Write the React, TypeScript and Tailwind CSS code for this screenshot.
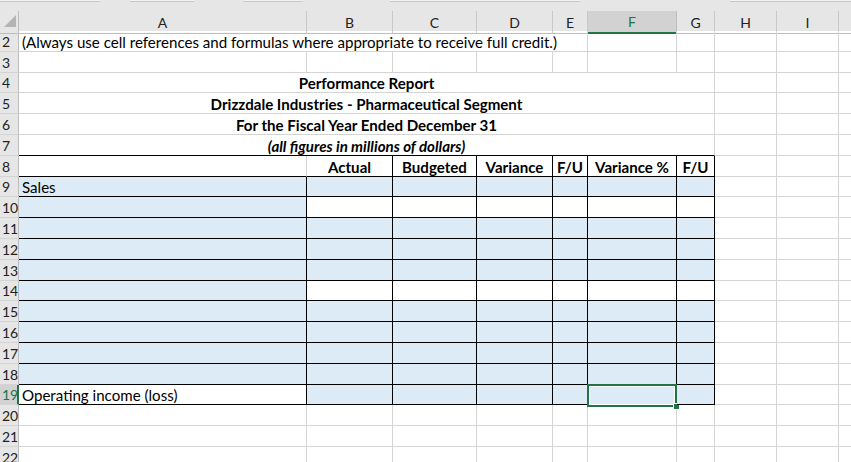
import React from "react";

const GRID = "grid grid-cols-[19px_288px_86px_84px_76px_35px_89px_38px_62px_62px_62px]";
const GRAY = "border-r border-b border-r-[#d4d4d4] border-b-[#d4d4d4]";
const BLACK = "border-r border-b border-r-black border-b-black";
const BLUE = "bg-[#ddebf7]";

// J is past the window edge, so its letter is left out
const COL_LETTERS = ["A", "B", "C", "D", "E", "F", "G", "H", "I", ""];
const HEADERS = ["Actual", "Budgeted", "Variance", "F/U", "Variance %", "F/U"];

function RowHead({ n, active = false }: { n: number; active?: boolean }) {
  return (
    <div
      className={`flex items-end pl-[2px] pb-[1px] text-[14px] leading-[16px] border-b border-b-[#d4d4d4] ${
        active
          ? "bg-[#d2d2d2] text-[#217346] border-r-2 border-r-[#217346]"
          : "bg-[#e6e6e6] text-[#222] border-r border-r-[#bdbdbd]"
      }`}
    >
      {n}
    </div>
  );
}

function Blank({ n }: { n: number }) {
  return (
    <>
      {Array.from({ length: n }).map((_, i) => (
        <div key={i} className={GRAY} />
      ))}
    </>
  );
}

function Row({ children }: { children: React.ReactNode }) {
  return <div className={`${GRID} h-[20.8px]`}>{children}</div>;
}

function TitleRow({ n, text, italic = false, last = false }: { n: number; text: string; italic?: boolean; last?: boolean }) {
  return (
    <Row>
      <RowHead n={n} />
      <div
        className={`col-span-7 flex items-end justify-center pb-[1px] font-bold leading-[16px] border-r border-b border-r-[#d4d4d4] ${
          last ? "border-b-black" : "border-b-[#d4d4d4]"
        } ${italic ? "italic" : ""}`}
      >
        {text}
      </div>
      <Blank n={3} />
    </Row>
  );
}

function DataRow({ n, label, whiteA = false, whiteRest = false, selected = false }: {
  n: number;
  label?: string;
  whiteA?: boolean;
  whiteRest?: boolean;
  selected?: boolean;
}) {
  return (
    <Row>
      <RowHead n={n} active={selected} />
      <div className={`${BLACK} ${whiteA ? "bg-white" : BLUE} flex items-end pl-[3px] pb-[1px] leading-[16px] whitespace-nowrap`}>
        {label}
      </div>
      {HEADERS.map((_, i) => (
        <div key={i} className={`${BLACK} ${whiteRest ? "bg-white" : BLUE} relative`}>
          {selected && i === 4 && (
            <>
              <div className="absolute left-[-1px] top-[-1px] right-[-1px] bottom-[-3px] border-2 border-[#217346] shadow-[inset_0_0_0_1px_white]" />
              <div className="absolute right-[-4px] bottom-[-6px] w-[7px] h-[7px] bg-[#217346] border border-white" />
            </>
          )}
        </div>
      ))}
      <Blank n={3} />
    </Row>
  );
}

export default function App() {
  return (
    <div className="w-[851px] h-[462px] overflow-hidden bg-white font-[Lato,sans-serif] text-[15.1px] text-black">
      {/* top strip */}
      <div className="h-[11px] bg-[#e6e6e6] relative">
        <div className="absolute top-0 left-0 h-[2px] w-[100px] bg-[#f2f2f2] border-b border-b-[#c8c8c8]" />
        <div className="absolute top-0 left-[130px] h-[2px] w-[64px] bg-[#f2f2f2] border-b border-b-[#c8c8c8]" />
        <div className="absolute top-0 left-[243px] h-[2px] w-[60px] bg-[#f2f2f2] border-b border-b-[#c8c8c8]" />
        <div className="absolute top-0 left-[390px] h-[2px] w-[190px] bg-[#f2f2f2] border-b border-b-[#c8c8c8]" />
        <div className="absolute top-0 left-[730px] h-[2px] w-[121px] bg-[#f2f2f2] border-b border-b-[#c8c8c8]" />
      </div>

      {/* column headers */}
      <div className={`${GRID} h-[20px] bg-[#e6e6e6] text-[14px] text-[#222]`}>
        <div className="relative border-r border-r-[#bdbdbd] border-b border-b-[#bdbdbd]">
          <svg className="absolute left-[4px] top-[4px]" width="12" height="12" viewBox="0 0 12 12">
            <polygon points="12,0 12,12 0,12" fill="#b4b4b4" />
          </svg>
        </div>
        {COL_LETTERS.map((c, i) =>
          c === "F" ? (
            <div key={i} className="flex items-center justify-center bg-[#d2d2d2] text-[#217346] border-r border-r-[#bdbdbd] border-b-2 border-b-[#217346]">
              {c}
            </div>
          ) : (
            <div key={i} className="flex items-center justify-center border-r border-r-[#c8c8c8] border-b border-b-[#bdbdbd]">
              {c}
            </div>
          )
        )}
      </div>

      {/* row 2 */}
      <Row>
        <RowHead n={2} />
        <div className="col-span-5 flex items-end pl-[3px] pb-[1px] leading-[16px] whitespace-nowrap border-r border-b border-r-[#d4d4d4] border-b-[#d4d4d4]">
          (Always use cell references and formulas where appropriate to receive full credit.)
        </div>
        <Blank n={5} />
      </Row>

      {/* row 3 */}
      <Row>
        <RowHead n={3} />
        <Blank n={10} />
      </Row>

      <TitleRow n={4} text="Performance Report" />
      <TitleRow n={5} text="Drizzdale Industries - Pharmaceutical Segment" />
      <TitleRow n={6} text="For the Fiscal Year Ended December 31" />
      <TitleRow n={7} text="(all figures in millions of dollars)" italic last />

      {/* row 8 headers */}
      <Row>
        <RowHead n={8} />
        <div className="border-r border-b border-r-[#d4d4d4] border-b-black" />
        {HEADERS.map((h, i) => (
          <div key={i} className={`${BLACK} flex items-end justify-center pb-[1px] font-bold leading-[16px] whitespace-nowrap`}>
            {h}
          </div>
        ))}
        <Blank n={3} />
      </Row>

      <DataRow n={9} label="Sales" />
      <DataRow n={10} whiteRest />
      <DataRow n={11} />
      <DataRow n={12} />
      <DataRow n={13} />
      <DataRow n={14} whiteRest />
      <DataRow n={15} />
      <DataRow n={16} />
      <DataRow n={17} />
      <DataRow n={18} />
      <DataRow n={19} label="Operating income (loss)" whiteA selected />

      {[20, 21, 22].map((n) => (
        <Row key={n}>
          <RowHead n={n} />
          <Blank n={10} />
        </Row>
      ))}
    </div>
  );
}
